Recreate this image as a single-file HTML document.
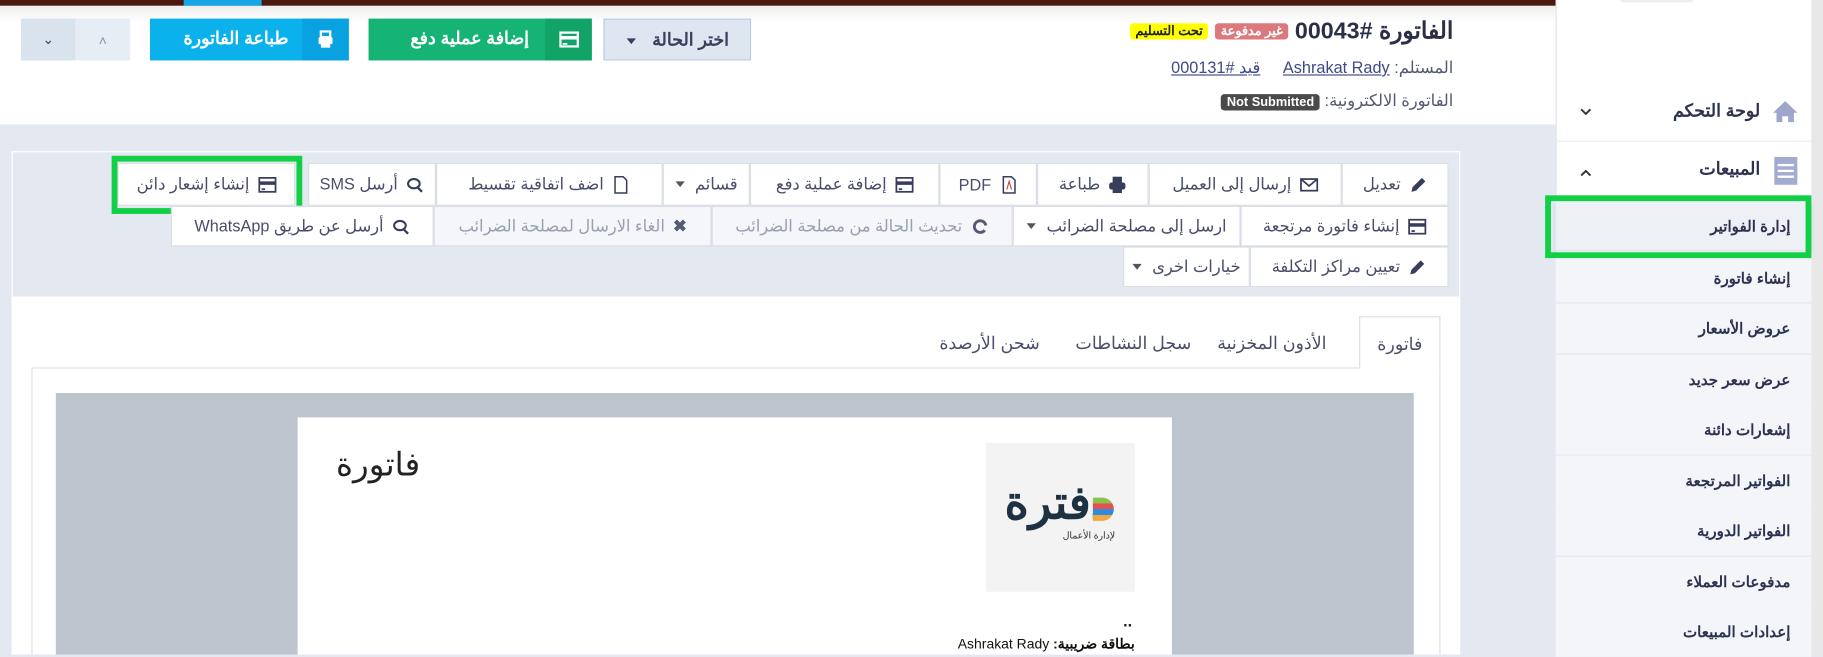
<!DOCTYPE html>
<html><head><meta charset="utf-8">
<style>
*{box-sizing:border-box;margin:0;padding:0}
html,body{width:1823px;height:655px;overflow:hidden;background:#e4e9f1}
#w{position:absolute;left:0;top:0;width:1568px;height:563px;transform:scale(1.16263);transform-origin:0 0;font-family:"Liberation Sans","Noto Sans CJK SC",sans-serif;color:#3a3f5c}
.a{position:absolute}
.btn{position:absolute;background:#fff;border:1px solid #d9dde3;font-size:14px;color:#4a4e6a;display:flex;align-items:center;justify-content:center;gap:7px;direction:rtl;white-space:nowrap}
.dis{background:#f4f6f9;color:#9aa0b3}
.ic{width:16px;height:16px;flex:none}
.car{display:inline-block;border-left:4px solid transparent;border-right:4px solid transparent;border-top:5px solid #555;margin-right:2px}
.sm{position:absolute;left:1338px;width:220px;height:43.5px;border-bottom:1px solid #e3e6ec;background:#f3f5f9;font-size:13px;font-weight:bold;color:#2d3250;text-align:right;padding-right:18px;direction:rtl}
.tab{position:absolute;top:286px;font-size:15px;color:#4a4e6a}
</style></head><body><div id="w">
<div class="a" style="left:0;top:0;width:1338px;height:107px;background:#fff"></div>
<div class="a" style="left:0;top:0;width:1338px;height:5px;background:#4a190b"></div>
<div class="a" style="left:158px;top:0;width:67px;height:5px;background:#17a6e8"></div>
<div class="a" style="left:0;top:5px;width:1338px;height:14px;background:linear-gradient(#eee,#fff)"></div>

<div class="a" style="left:18px;top:16px;width:47px;height:36px;background:#d9e3ee;font-size:12px;text-align:center;line-height:36px;color:#3a3f5c">&#8964;</div>
<div class="a" style="left:65px;top:16px;width:47px;height:36px;background:#e7edf5;text-align:center;line-height:38px;font-size:12px;color:#8a90a5">&#708;</div>
<div class="a" style="left:129px;top:16px;width:171px;height:36px;background:#0bb1ea;color:#fff;font-weight:bold;font-size:15px;direction:rtl">
 <div class="a" style="right:0;top:0;width:40px;height:36px;background:#08a2e1"><svg class="a" style="left:13px;top:10px" width="14" height="16" viewBox="0 0 14 16"><rect x="3" y="1" width="8" height="5" fill="none" stroke="#fff" stroke-width="2"/><rect x="1" y="6" width="12" height="6" rx="1" fill="#fff"/><rect x="3" y="11" width="8" height="4" fill="#fff"/></svg></div>
 <div class="a" style="right:52px;top:8px">طباعة الفاتورة</div></div>
<div class="a" style="left:317px;top:16px;width:192px;height:36px;background:#15b374;color:#fff;font-weight:bold;font-size:15px;direction:rtl">
 <div class="a" style="right:0;top:0;width:40px;height:36px;background:#12a366"><svg class="a" style="left:12px;top:11px" width="17" height="14"><rect x="1" y="1" width="15" height="12" fill="none" stroke="#fff" stroke-width="2"/><rect x="1" y="4" width="15" height="3" fill="#fff"/><rect x="3" y="10" width="4" height="1.5" fill="#fff"/></svg></div>
 <div class="a" style="right:54px;top:8px">إضافة عملية دفع</div></div>
<div class="a" style="left:519px;top:16px;width:127px;height:36px;background:#dde6f1;border:1px solid #b9cde4;font-size:15px;font-weight:bold;direction:rtl;padding:8px 18px 0 0">اختر الحالة <span class="car" style="border-top-color:#3a3f5c;margin-right:10px;vertical-align:middle"></span></div>

<div class="a" style="right:318px;top:14px;direction:rtl;font-size:20px;font-weight:bold;color:#2a2f45;white-space:nowrap">الفاتورة #00043 <span style="background:#dc797e;color:#fff;font-size:11px;padding:1px 5px;border-radius:3px;vertical-align:3px">غير مدفوعة</span> <span style="background:#ffff00;color:#222;font-size:11px;padding:1px 5px;border-radius:3px;vertical-align:3px">تحت التسليم</span></div>
<div class="a" style="right:318px;top:50px;direction:rtl;font-size:14px;color:#555a70;white-space:nowrap">المستلم: <u style="color:#3f4a8a">Ashrakat Rady</u>&nbsp;&nbsp;&nbsp;&nbsp; <u style="color:#3f4a8a">قيد #000131</u></div>
<div class="a" style="right:318px;top:78px;direction:rtl;font-size:14px;color:#555a70;white-space:nowrap">الفاتورة الالكترونية: <span style="background:#4a4a4a;color:#fff;font-size:11px;font-weight:bold;padding:1px 5px;border-radius:3px">Not Submitted</span></div>

<div class="a" style="left:10px;top:130px;width:1246px;height:125px;background:#e4e9f1;border:1px solid #fff;border-bottom:none"></div>
<div class="a" style="left:10px;top:255px;width:1246px;height:308px;background:#fff"></div>

<div class="btn" style="left:1154px;top:140px;width:92px;height:37px"><svg class="ic" viewBox="0 0 16 16"><path d="M2 14l1-4 8-8 3 3-8 8z" fill="#373d5a"/></svg>تعديل</div>
<div class="btn" style="left:988px;top:140px;width:166px;height:37px"><svg class="ic" viewBox="0 0 16 16"><rect x="1" y="3" width="14" height="10" fill="none" stroke="#373d5a" stroke-width="1.5"/><path d="M1 3l7 6 7-6" fill="none" stroke="#373d5a" stroke-width="1.5"/></svg>إرسال إلى العميل</div>
<div class="btn" style="left:892px;top:140px;width:96px;height:37px"><svg class="ic" viewBox="0 0 16 16"><rect x="4" y="1" width="8" height="5" fill="#373d5a"/><rect x="1" y="6" width="14" height="6" rx="2" fill="#373d5a"/><rect x="4" y="11" width="8" height="4" fill="#373d5a"/></svg>طباعة</div>
<div class="btn" style="left:808px;top:140px;width:84px;height:37px"><svg class="ic" viewBox="0 0 16 16"><path d="M3 1h7l3 3v11H3z" fill="none" stroke="#373d5a" stroke-width="1.3"/><path d="M6 12l2-7 2 7" fill="none" stroke="#c44" stroke-width="1"/></svg>PDF</div>
<div class="btn" style="left:645px;top:140px;width:163px;height:37px"><svg class="ic" viewBox="0 0 16 16"><rect x="1" y="2" width="14" height="12" fill="none" stroke="#373d5a" stroke-width="1.5"/><rect x="1" y="5" width="14" height="3" fill="#373d5a"/><rect x="3" y="11" width="3" height="1.5" fill="#373d5a"/></svg>إضافة عملية دفع</div>
<div class="btn" style="left:570px;top:140px;width:75px;height:37px">قسائم<span class="car"></span></div>
<div class="btn" style="left:375px;top:140px;width:195px;height:37px"><svg class="ic" viewBox="0 0 16 16"><path d="M3 1h7l3 3v11H3z" fill="none" stroke="#373d5a" stroke-width="1.3"/></svg>اضف اتفاقية تقسيط</div>
<div class="btn" style="left:265px;top:140px;width:110px;height:37px"><svg class="ic" viewBox="0 0 16 16"><ellipse cx="7" cy="7" rx="5" ry="4" fill="none" stroke="#373d5a" stroke-width="1.8"/><path d="M10 10l4 4" stroke="#373d5a" stroke-width="2"/></svg>أرسل SMS</div>
<div class="btn" style="left:101px;top:140px;width:153px;height:37px"><svg class="ic" viewBox="0 0 16 16"><rect x="1" y="2" width="14" height="12" fill="none" stroke="#373d5a" stroke-width="1.5"/><rect x="1" y="5" width="14" height="3" fill="#373d5a"/><rect x="3" y="11" width="3" height="1.5" fill="#373d5a"/></svg>إنشاء إشعار دائن</div>
<div class="a" style="left:96px;top:134px;width:164px;height:50px;border:5px solid #11d046"></div>
<div class="btn" style="left:1067px;top:177px;width:179px;height:35px"><svg class="ic" viewBox="0 0 16 16"><rect x="1" y="2" width="14" height="12" fill="none" stroke="#373d5a" stroke-width="1.5"/><rect x="1" y="5" width="14" height="3" fill="#373d5a"/><rect x="3" y="11" width="3" height="1.5" fill="#373d5a"/></svg>إنشاء فاتورة مرتجعة</div>
<div class="btn" style="left:871px;top:177px;width:196px;height:35px">ارسل إلى مصلحة الضرائب<span class="car"></span></div>
<div class="btn dis" style="left:612px;top:177px;width:259px;height:35px"><svg class="ic" viewBox="0 0 16 16"><path d="M13 7a5 5 0 1 0-1 4" fill="none" stroke="#555b70" stroke-width="2.5"/></svg>تحديث الحالة من مصلحة الضرائب</div>
<div class="btn dis" style="left:373px;top:177px;width:239px;height:35px"><span style="color:#555b70;font-weight:bold">&#10006;</span>الغاء الارسال لمصلحة الضرائب</div>
<div class="btn" style="left:147px;top:177px;width:226px;height:35px"><svg class="ic" viewBox="0 0 16 16"><ellipse cx="7" cy="7" rx="5" ry="4" fill="none" stroke="#373d5a" stroke-width="1.8"/><path d="M10 10l4 4" stroke="#373d5a" stroke-width="2"/></svg>أرسل عن طريق WhatsApp</div>
<div class="btn" style="left:1075px;top:212px;width:171px;height:35px"><svg class="ic" viewBox="0 0 16 16"><path d="M2 14l1-4 8-8 3 3-8 8z" fill="#373d5a"/></svg>تعيين مراكز التكلفة</div>
<div class="btn" style="left:966px;top:212px;width:109px;height:35px">خيارات اخرى<span class="car"></span></div>

<div class="a" style="left:27px;top:316px;width:1212px;height:247px;border:1px solid #dcdfe4;border-bottom:none"></div>
<div class="a" style="left:1169px;top:272px;width:70px;height:45px;background:#fff;border:1px solid #dcdfe4;border-bottom:none;font-size:15px;text-align:center;line-height:48px;color:#4a4e6a">فاتورة</div>
<div class="tab" style="left:1047px">الأذون المخزنية</div>
<div class="tab" style="left:925px">سجل النشاطات</div>
<div class="tab" style="left:808px">شحن الأرصدة</div>

<div class="a" style="left:48px;top:338px;width:1168px;height:225px;background:#bdc4cd"></div>
<div class="a" style="left:256px;top:359px;width:752px;height:204px;background:#fff"></div>
<div class="a" style="left:848px;top:381px;width:128px;height:128px;background:#f3f3f3"></div>
<div class="a" style="left:864px;top:410px;font-size:40px;font-weight:bold;color:#1d3142;direction:rtl;letter-spacing:-1px">دفترة</div>
<div class="a" style="left:940px;top:428px;width:18px;height:20px;background:linear-gradient(#8bc34a 0 25%,#e84e4e 25% 50%,#2a8de0 50% 75%,#f4a640 75%);border-radius:0 10px 10px 0"></div>
<div class="a" style="left:914px;top:456px;font-size:8px;color:#333">لإدارة الأعمال</div>
<div class="a" style="left:289px;top:383px;font-size:28px;color:#222">فاتورة</div>
<div class="a" style="left:966px;top:526px;font-size:14px;font-weight:bold;color:#222">..</div>
<div class="a" style="right:592px;top:547px;direction:rtl;font-size:12px;color:#111;white-space:nowrap"><b>بطاقة ضريبية:</b> Ashrakat Rady</div>

<div class="a" style="left:1338px;top:0;width:220px;height:563px;background:#fff;border-left:1px solid #dfe3ea"></div>
<div class="a" style="left:1558px;top:0;width:10px;height:563px;background:#e8e8e8"></div>
<div class="a" style="left:1394px;top:0;width:62px;height:2px;background:#eee"></div>
<div class="a" style="left:1338px;top:121px;width:220px;height:1px;background:#ececf0"></div>
<svg class="a" style="left:1524px;top:86px" width="23" height="20" viewBox="0 0 23 20"><path d="M11.5 1L1 11h3v8h5v-5h5v5h5v-8h3z" fill="#9ea6cc"/></svg>
<div class="a" style="right:54px;top:86px;font-size:15px;font-weight:bold;color:#2d3250">لوحة التحكم</div>
<svg class="a" style="left:1359px;top:93px" width="10" height="7"><path d="M1 1l4 4 4-4" fill="none" stroke="#333" stroke-width="1.6"/></svg>
<svg class="a" style="left:1526px;top:135px" width="20" height="24"><rect x="0" y="0" width="20" height="24" fill="#a4abd0"/><rect x="3" y="6" width="14" height="2" fill="#fff"/><rect x="3" y="11" width="14" height="2" fill="#fff"/><rect x="3" y="16" width="14" height="2" fill="#fff"/></svg>
<div class="a" style="right:54px;top:136px;font-size:15px;font-weight:bold;color:#2d3250">المبيعات</div>
<svg class="a" style="left:1359px;top:145px" width="10" height="7"><path d="M1 6l4-4 4 4" fill="none" stroke="#333" stroke-width="1.6"/></svg>

<div class="sm" style="top:172px;line-height:46px;background:#edf0f5;box-shadow:0 2px 4px rgba(0,0,0,.08)">إدارة الفواتير</div>
<div class="sm" style="top:261px;line-height:43px">عروض الأسعار</div>
<div class="sm" style="top:305px;line-height:43px">عرض سعر جديد</div>
<div class="sm" style="top:348px;line-height:43px">إشعارات دائنة</div>
<div class="sm" style="top:392px;line-height:43px">الفواتير المرتجعة</div>
<div class="sm" style="top:435px;line-height:43px">الفواتير الدورية</div>
<div class="sm" style="top:479px;line-height:43px">مدفوعات العملاء</div>
<div class="sm" style="top:522px;line-height:43px">إعدادات المبيعات</div>
<div class="sm" style="top:218px;line-height:43px;height:43px">إنشاء فاتورة</div>
<div class="a" style="left:1329px;top:168px;width:229px;height:54px;border:5px solid #11d046"></div>
</div></body></html>
